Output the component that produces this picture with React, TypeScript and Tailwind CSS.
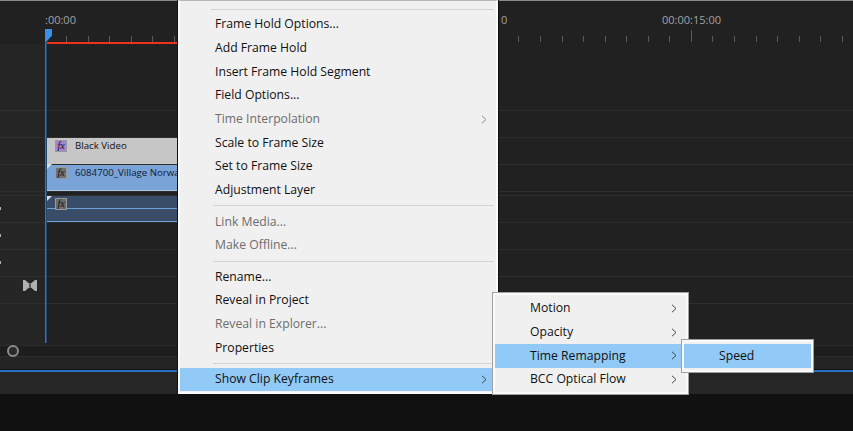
const font = { fontFamily: '"Open Sans", "Noto Sans", sans-serif' };

function Chevron({ muted }: { muted?: boolean }) {
  return (
    <svg width="6" height="9" viewBox="0 0 6 9" fill="none" className="shrink-0">
      <path d="M1 0.8 L5 4.5 L1 8.2" stroke={muted ? '#8c8c8c' : '#444444'} strokeWidth="1" />
    </svg>
  );
}

function MenuItem({ label, disabled, sub, active }: { label: string; disabled?: boolean; sub?: boolean; active?: boolean }) {
  return (
    <div className={`flex h-[23.7px] items-center justify-between pl-[35px] pr-[9px] text-[12.2px] ${active ? 'bg-[#91c9f7]' : ''} ${disabled ? 'text-[#6d6d6d]' : 'text-[#111111]'}`}>
      <span>{label}</span>
      {sub && <Chevron muted={disabled} />}
    </div>
  );
}

function Sep() {
  return <div className="ml-[33px] mr-[2px] my-[3.4px] h-[1px] bg-[#d4d4d4]" />;
}

function Fx({ tint }: { tint: string }) {
  return (
    <div className={`flex h-[12px] w-[12px] shrink-0 items-center justify-center border border-[#9a9a9a] text-[10px] italic leading-none text-[#111] ${tint}`} style={{ fontFamily: '"Liberation Serif", serif' }}>
      fx
    </div>
  );
}

// one timeline row: header column on the left, clip lane on the right
function Track({ h, children }: { h: string; children?: React.ReactNode }) {
  return (
    <div className={`flex ${h} border-b border-[#2e2e2e]`}>
      <div className="w-[45px] shrink-0 bg-[#252525]" />
      <div className="min-w-0 flex-1 bg-[#212121]">{children}</div>
    </div>
  );
}

const ticks = Array.from({ length: 37 });

export default function App() {
  return (
    <div className="relative h-[431px] w-[853px] overflow-hidden bg-[#111111]" style={font}>
      <div className="flex h-[394px] flex-col bg-[#212121]">
        <div className="h-[1px] bg-[#8a8a8a]" />
        {/* ruler */}
        <div className="relative h-[41px]">
          <span className="absolute left-[45px] top-[13px] text-[11px] leading-none text-[#a3a3a3]">:00:00</span>
          <span className="absolute left-[501px] top-[13px] text-[11px] leading-none text-[#a3a3a3]">0</span>
          <span className="absolute left-[662px] top-[13px] text-[11px] leading-none text-[#a3a3a3]">00:00:15:00</span>
          <div className="absolute bottom-0 left-[66px] flex gap-[20.55px]">
            {ticks.map((_, i) => (
              <div key={i} className={`w-[1px] self-end bg-[#5a5a5a] ${i === 29 ? 'h-[12px]' : 'h-[6px]'}`} />
            ))}
          </div>
        </div>
        <div className="ml-[46px] h-[2px] w-[132px] bg-[#f1301f]" />
        <Track h="h-[67px]" />
        <Track h="h-[27px]" />
        <Track h="h-[27px]">
          <div className="flex h-full w-[133px] items-start gap-[8px] bg-[#c6c6c6] pl-[10px] pt-[2px]">
            <Fx tint="bg-[#a583d6]" />
            <span className="text-[9.7px] leading-[11px] text-[#111]">Black Video</span>
          </div>
        </Track>
        <Track h="h-[27px]">
          <div className="flex h-full w-[133px] items-start gap-[8px] border-b border-[#a9c6ea] bg-[#7aa3d7] pl-[10px] pt-[2px]">
            <Fx tint="bg-[#717171]" />
            <span className="whitespace-nowrap text-[9.7px] leading-[12px] text-[#111a33]">6084700_Village Norway</span>
          </div>
        </Track>
        <Track h="h-[4px]" />
        <Track h="h-[27px]">
          <div className="h-full w-[133px] border-b border-[#6f9fd8] bg-[#3a4d68]">
            <div className="h-[13px] border-b border-[#6f9fd8] pl-[10px] pt-[2px]">
              <Fx tint="bg-[#6b6b6b]" />
            </div>
          </div>
        </Track>
        <Track h="h-[27px]" />
        <Track h="h-[27px]" />
        <Track h="h-[27px]" />
        <div className="flex h-[41px]">
          <div className="w-[45px] shrink-0 bg-[#252525]" />
          <div className="flex-1 bg-[#212121]" />
        </div>
        {/* scrollbar */}
        <div className="h-[12px] border-y border-[#2c2c2c] bg-[#1d1d1d]" />
        <div className="h-[12px] bg-[#242424]" />
        <div className="h-[1px] bg-[#111111]" />
        <div className="h-[2px] bg-[#2a6fc4]" />
        <div className="flex-1 bg-[#262626]" />
      </div>

      {/* playhead */}
      <div className="absolute left-[45px] top-[29px] h-[12px] w-[7px] bg-[#3a8fe8] [clip-path:polygon(0_0,100%_0,100%_55%,30%_100%,0_100%)]" />
      <div className="absolute left-[45px] top-[41px] h-[302px] w-[2px] border-r border-[#1d4a7a] bg-[#2a78c8]" />

      {/* small marks on the track headers */}
      <div className="absolute left-0 top-[207px] h-[3px] w-[1px] bg-[#b0b0b0]" />
      <div className="absolute left-0 top-[234px] h-[3px] w-[1px] bg-[#b0b0b0]" />
      <div className="absolute left-0 top-[261px] h-[3px] w-[1px] bg-[#b0b0b0]" />
      <svg className="absolute left-[23px] top-[280px]" width="14" height="11" viewBox="0 0 14 11">
        <path d="M0 0 L2 0 L6 3.5 L8 3.5 L12 0 L14 0 L14 11 L12 11 L8 7.5 L6 7.5 L2 11 L0 11 Z" fill="#b0b0b0" />
        <rect x="6" y="4" width="2" height="3" fill="#555555" />
      </svg>
      <div className="absolute left-[7px] top-[345px] h-[12px] w-[12px] rounded-full border-2 border-[#8c8c8c] bg-[#2a2a2a]" />
      <svg className="absolute left-[47px] top-[164px]" width="5" height="5" viewBox="0 0 5 5"><path d="M0 5 L5 0 L0 0 Z" fill="#dddddd" /></svg>
      <svg className="absolute left-[47px] top-[196px]" width="5" height="5" viewBox="0 0 5 5"><path d="M0 5 L5 0 L0 0 Z" fill="#dddddd" /></svg>

      {/* main context menu */}
      <div className="absolute left-[178px] top-0 h-[394px] w-[320px] border-x-2 border-b-2 border-t border-[#fafafa] border-t-[#b8b8b8] bg-[#f0f0f0] shadow-[-1px_0_0_#111,1px_0_0_#111]">
        <div className="ml-[31px] mr-[2px] mt-[8px] h-[1px] bg-[#d4d4d4]" />
        <div className="mt-[2.6px]">
          <MenuItem label="Frame Hold Options..." />
          <MenuItem label="Add Frame Hold" />
          <MenuItem label="Insert Frame Hold Segment" />
          <MenuItem label="Field Options..." />
          <MenuItem label="Time Interpolation" disabled sub />
          <MenuItem label="Scale to Frame Size" />
          <MenuItem label="Set to Frame Size" />
          <MenuItem label="Adjustment Layer" />
          <Sep />
          <MenuItem label="Link Media..." disabled />
          <MenuItem label="Make Offline..." disabled />
          <Sep />
          <MenuItem label="Rename..." />
          <MenuItem label="Reveal in Project" />
          <MenuItem label="Reveal in Explorer..." disabled />
          <MenuItem label="Properties" />
          <Sep />
          <MenuItem label="Show Clip Keyframes" sub active />
        </div>
      </div>

      {/* keyframes submenu */}
      <div className="absolute left-[493px] top-[293px] w-[195px] border-2 border-[#fafafa] bg-[#f0f0f0] pt-[1.5px] pb-[0.5px] shadow-[0_0_0_1px_#a0a0a0]">
        <MenuItem label="Motion" sub />
        <MenuItem label="Opacity" sub />
        <MenuItem label="Time Remapping" sub active />
        <MenuItem label="BCC Optical Flow" sub />
      </div>

      {/* speed submenu */}
      <div className="absolute left-[682px] top-[340px] w-[131px] border-2 border-[#fafafa] bg-[#f0f0f0] py-[2px] shadow-[0_0_0_1px_#a0a0a0]">
        <MenuItem label="Speed" active />
      </div>
    </div>
  );
}
